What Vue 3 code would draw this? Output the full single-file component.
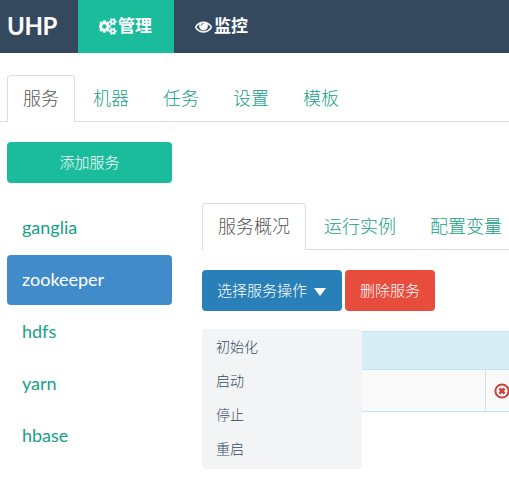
<script setup>
const tabs = ['服务', '机器', '任务', '设置', '模板']
const services = ['ganglia', 'zookeeper', 'hdfs', 'yarn', 'hbase']
const subTabs = ['服务概况', '运行实例', '配置变量']
const actions = ['初始化', '启动', '停止', '重启']
</script>

<template>
  <div class="page">
    <header class="navbar">
      <div class="brand">UHP</div>
      <a class="nav-item active">
        <svg class="cogs" viewBox="0 0 1920 1792"><path fill="currentColor" stroke="currentColor" stroke-width="50" d="M832 896q0-106-75-181t-181-75-181 75-75 181 75 181 181 75 181-75 75-181zm768 512q0-52-38-90t-90-38-90 38-38 90q0 53 37.5 90.5t90.5 37.5 90.5-37.5 37.5-90.5zm0-1024q0-52-38-90t-90-38-90 38-38 90q0 53 37.5 90.5t90.5 37.5 90.5-37.5 37.5-90.5zm-384 421v185q0 10-7 19.5t-16 10.5l-155 24q-11 35-32 76 34 48 90 115 7 11 7 20 0 12-7 19-23 30-82.5 89.5t-78.5 59.5q-11 0-21-7l-115-90q-37 19-77 31-11 108-23 155-7 24-30 24h-186q-11 0-20-7.5t-10-17.5l-23-153q-34-10-75-31l-118 89q-7 7-20 7-11 0-21-8-144-133-144-160 0-9 7-19 10-14 41-53t47-61q-23-44-35-82l-152-24q-10-1-17-9.5t-7-19.5v-185q0-10 7-19.5t16-10.5l155-24q11-35 32-76-34-48-90-115-7-11-7-20 0-12 7-20 22-30 82-89t79-59q11 0 21 7l115 90q34-18 77-32 11-108 23-154 7-24 30-24h186q11 0 20 7.5t10 17.5l23 153q34 10 75 31l118-89q8-7 20-7 11 0 21 8 144 133 144 160 0 8-7 19-12 16-42 54t-45 60q23 48 34 82l152 23q10 2 17 10.5t7 19.5zm640 533v140q0 16-149 31-12 27-30 52 51 113 51 138 0 4-4 7-122 71-124 71-8 0-46-47t-52-68q-20 2-30 2t-30-2q-14 21-52 68t-46 47q-2 0-124-71-4-3-4-7 0-25 51-138-18-25-30-52-149-15-149-31v-140q0-16 149-31 13-29 30-52-51-113-51-138 0-4 4-7 4-2 35-20t59-34 30-16q8 0 46 46.5t52 67.5q20-2 30-2t30 2q51-71 92-112l6-2q4 0 124 70 4 3 4 7 0 25-51 138 17 23 30 52 149 15 149 31zm0-1024v140q0 16-149 31-12 27-30 52 51 113 51 138 0 4-4 7-122 71-124 71-8 0-46-47t-52-68q-20 2-30 2t-30-2q-14 21-52 68t-46 47q-2 0-124-71-4-3-4-7 0-25 51-138-18-25-30-52-149-15-149-31v-140q0-16 149-31 13-29 30-52-51-113-51-138 0-4 4-7 4-2 35-20t59-34 30-16q8 0 46 46.5t52 67.5q20-2 30-2t30 2q51-71 92-112l6-2q4 0 124 70 4 3 4 7 0 25-51 138 17 23 30 52 149 15 149 31z" /></svg>
        <span>管理</span>
      </a>
      <a class="nav-item">
        <svg class="eye" viewBox="0 0 1792 1792"><path fill="currentColor" stroke="currentColor" stroke-width="40" d="M1664 960q-152-236-381-353 61 104 61 225 0 185-131.5 316.5t-316.5 131.5-316.5-131.5-131.5-316.5q0-121 61-225-229 117-381 353 133 205 333.5 326.5t434.5 121.5 434.5-121.5 333.5-326.5zm-720-384q0-20-14-34t-34-14q-125 0-214.5 89.5t-89.5 214.5q0 20 14 34t34 14 34-14 14-34q0-86 61-147t147-61q20 0 34-14t14-34zm848 384q0 34-20 69-140 230-376.5 368.5t-499.5 138.5-499.5-139-376.5-368q-20-35-20-69t20-69q140-229 376.5-368t499.5-139 499.5 139 376.5 368q20 35 20 69z" /></svg>
        <span>监控</span>
      </a>
    </header>

    <nav class="tabs">
      <a v-for="(t, i) in tabs" :key="t" class="tab" :class="{ active: i === 0 }">{{ t }}</a>
    </nav>

    <div class="body">
      <aside class="sidebar">
        <button class="btn add">添加服务</button>
        <ul class="services">
          <li v-for="s in services" :key="s" :class="{ active: s === 'zookeeper' }">{{ s }}</li>
        </ul>
      </aside>

      <main class="main">
        <nav class="tabs sub">
          <a v-for="(t, i) in subTabs" :key="t" class="tab" :class="{ active: i === 0 }">{{ t }}</a>
        </nav>
        <div class="toolbar">
          <div class="dropdown">
            <button class="btn choose"><span>选择服务操作</span><i class="caret"></i></button>
            <ul class="menu">
              <li v-for="a in actions" :key="a">{{ a }}</li>
            </ul>
          </div>
          <button class="btn remove">删除服务</button>
        </div>
        <div class="table">
          <div class="thead"></div>
          <div class="trow">
            <div class="cell first"></div>
            <div class="cell">
              <svg class="fail" viewBox="0 0 16 16" fill="none" stroke="currentColor">
                <circle cx="8" cy="8" r="6.6" stroke-width="2" />
                <path d="M5.5 5.5l5 5M10.5 5.5l-5 5" stroke-width="2.7" />
              </svg>
            </div>
          </div>
        </div>
      </main>
    </div>
  </div>
</template>

<style>
body {
  margin: 0;
  background: #fff;
}
</style>

<style scoped>
.page {
  width: 100%;
  height: 481px;
  overflow: hidden;
  font-family: Lato, "Noto Sans CJK SC", sans-serif;
  font-size: 18px;
  font-weight: 400;
  color: #34495e;
}
ul {
  list-style: none;
  margin: 0;
  padding: 0;
}
.navbar {
  display: flex;
  height: 53px;
  background: #34495e;
  color: #fff;
}
.brand {
  box-sizing: border-box;
  width: 78px;
  padding-left: 7px;
  font-size: 24px;
  font-weight: 700;
  letter-spacing: -0.4px;
  line-height: 52px;
}
.nav-item {
  box-sizing: border-box;
  width: 96px;
  padding-left: 21px;
  display: flex;
  align-items: center;
  font-size: 17px;
  font-weight: 700;
  line-height: 53px;
}
.nav-item span {
  line-height: 51px;
  height: 53px;
}
.nav-item.active {
  background: #1abc9c;
}
.cogs {
  width: 18px;
  height: 17px;
  margin-right: 1px;
}
.eye {
  width: 17px;
  height: 17px;
  margin-right: 2px;
}
.tabs {
  display: flex;
  gap: 2px;
  box-sizing: border-box;
  height: 47px;
  margin: 22px 0 0;
  padding-left: 7px;
  border-bottom: 1px solid #ddd;
  font-weight: 300;
  white-space: nowrap;
}
.tabs.sub {
  margin: 0;
  padding-left: 0;
}
.tab {
  box-sizing: border-box;
  flex: none;
  height: 47px;
  padding: 0 15px;
  border: 1px solid transparent;
  border-bottom: 0;
  border-radius: 4px 4px 0 0;
  line-height: 45px;
  color: #16a085;
}
.tab.active {
  background: #fff;
  border-color: #ddd;
  color: #555;
}
.body {
  display: flex;
  gap: 30px;
  padding-left: 7px;
}
.sidebar {
  flex: none;
  width: 165px;
  padding-top: 20px;
}
.btn {
  height: 41px;
  padding: 0 15px 1px;
  border: 0;
  border-radius: 4px;
  font: inherit;
  font-size: 15px;
  font-weight: 300;
  line-height: 40px;
  color: #fff;
  white-space: nowrap;
}
.add {
  display: block;
  width: 100%;
  background: #1abc9c;
}
.services {
  display: grid;
  gap: 2px;
  margin-top: 20px;
}
.services li {
  height: 50px;
  padding-left: 15px;
  border-radius: 4px;
  line-height: 48px;
  color: #16a085;
}
.services li.active {
  background: #428bca;
  color: #fff;
}
.main {
  flex: 1;
  min-width: 0;
  padding-top: 81px;
}
.toolbar {
  display: flex;
  gap: 3px;
  margin-top: 20px;
}
.dropdown {
  position: relative;
}
.choose {
  display: flex;
  align-items: center;
  gap: 7px;
  width: 140px;
  background: #2980b9;
}
.caret {
  margin-top: 4px;
  border: 6.5px solid transparent;
  border-top: 8px solid #fff;
  border-bottom: 0;
}
.remove {
  width: 90px;
  background: #e74c3c;
}
.menu {
  position: absolute;
  z-index: 1;
  top: 59px;
  left: 0;
  box-sizing: border-box;
  width: 160px;
  height: 140px;
  padding: 1px 0 0 14px;
  border-radius: 4px;
  background: #f3f4f5;
  font-size: 14px;
  font-weight: 300;
  color: #34495e;
}
.menu li {
  height: 34px;
  line-height: 33px;
}
.table {
  margin-top: 20px;
  border-top: 1px solid #bce8f1;
  border-bottom: 1px solid #bce8f1;
}
.thead {
  height: 37px;
  background: #d9edf7;
  border-bottom: 1px solid #bce8f1;
}
.trow {
  display: flex;
  height: 41px;
  background: #f9f9f9;
}
.cell {
  display: flex;
  align-items: center;
  padding-left: 8px;
}
.cell.first {
  width: 275px;
  border-right: 1px solid #ddd;
  flex: none;
}
.fail {
  flex: none;
  width: 16px;
  height: 16px;
  color: #c9403c;
}
</style>
